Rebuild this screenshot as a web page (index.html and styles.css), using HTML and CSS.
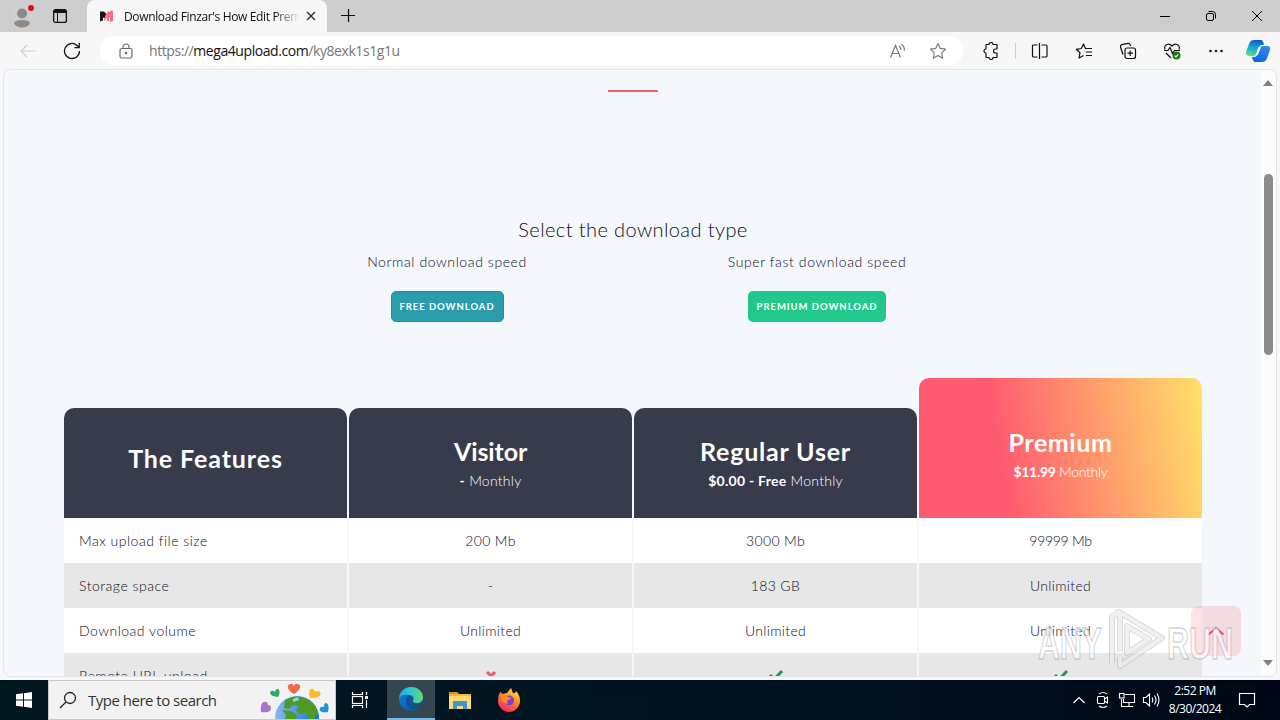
FILE: index.html
```html
<!DOCTYPE html>
<html lang="en">
<head>
    <meta charset="UTF-8">
    <meta name="viewport" content="width=device-width, initial-scale=1.0">
    <title>Download Finzar's How Edit Premium</title>
    <link rel="stylesheet" href="styles.css">
</head>
<body>

    <header class="titlebar">
        <div class="profile">
            <svg width="28" height="30" viewBox="0 0 28 30"><circle cx="14" cy="16" r="11.500" fill="#d0cfce"/><circle cx="14" cy="12.500" r="5" fill="#8d8987"/><path d="M6 22.500q0-3.500 8-3.500t8 3.500q-2.500 4-8 4t-8-4z" fill="#8d8987"/><circle cx="23" cy="7" r="3" fill="#e00b1c"/></svg>
        </div>
        <div class="workspaces">
            <svg width="16" height="16" viewBox="0 0 16 16" fill="none" stroke="#111"><rect x="1.600" y="1.600" width="12.800" height="12.800" rx="2" stroke-width="1.300"/><path d="M2 3.500h12" stroke-width="3"/><path d="M5.500 4v10"/></svg>
        </div>
        <div class="tab">
            <svg class="favicon" width="16" height="16" viewBox="0 0 16 16"><path d="M1 3.500h4l2 2v5l-3-1v3l-3 1z" fill="#16151c"/><path d="M6 8l3-5 1 1 3-2 1 2v9l-3 1V9l-1 0v4l-2 0V9l-2 4H5z" fill="#ff6d80"/></svg>
            <span class="tab-title">Download Finzar's How Edit Prem</span>
            <svg class="tab-close" width="10" height="10" viewBox="0 0 10 10" stroke="#222" stroke-width="1.200"><path d="M1 1l8 8M9 1l-8 8"/></svg>
        </div>
        <svg class="new-tab" width="14" height="14" viewBox="0 0 14 14" stroke="#111" stroke-width="1.200"><path d="M0 6.500h14M7.500 0v13"/></svg>
        <div class="window-buttons">
            <span><svg width="12" height="12" viewBox="0 0 12 12" stroke="#000"><path d="M1 6.500h10"/></svg></span>
            <span><svg width="12" height="12" viewBox="0 0 12 12" fill="none" stroke="#000"><rect x="1.500" y="3.500" width="7" height="7" rx="1.500"/><path d="M3.500 1.500h4q3 0 3 3v4"/></svg></span>
            <span><svg width="12" height="12" viewBox="0 0 12 12" stroke="#000"><path d="M1 1l10 10M11 1L1 11"/></svg></span>
        </div>
    </header>

    <nav class="toolbar">
        <span class="tool"><svg width="18" height="16" viewBox="0 0 18 16" fill="none" stroke="#cdcdcd" stroke-width="1.200"><path d="M17 8H2M8 2L2 8l6 6"/></svg></span>
        <span class="tool"><svg width="18" height="18" viewBox="0 0 18 18" fill="none" stroke="#111" stroke-width="1.300"><path d="M16.500 9A7.500 7.500 0 1 1 14 3.400L16 5.500M16.200 1v4.700h-4.700"/></svg></span>
        <div class="address">
            <svg width="14" height="16" viewBox="0 0 14 16" fill="none" stroke="#6a6a6a" stroke-width="1.200"><rect x="1" y="5.500" width="12" height="9.500" rx="1.800"/><path d="M4 5.500V4a3 3 0 0 1 6 0v1.500"/><circle cx="7" cy="10" r=".6" fill="#555"/></svg>
            <span class="url">https://<b>mega4upload.com</b>/ky8exk1s1g1u</span>
            <svg class="read-aloud" width="18" height="16" viewBox="0 0 18 16" fill="none" stroke="#777" stroke-width="1.200"><path d="M1.500 14.500L6.500 2.500 11.500 14.500M3.200 10.500h6.600M10 3q2 1.500 2 4M12 1q3.500 2 3.500 6.500"/></svg>
            <svg width="18" height="18" viewBox="0 0 18 18" fill="none" stroke="#777" stroke-width="1.100" stroke-linejoin="round"><path d="M9 1.500l2.300 4.900 5.300.7-3.900 3.700 1 5.400L9 13.600l-4.700 2.600 1-5.400-3.900-3.700 5.300-.7z"/></svg>
        </div>
        <span class="tool"><svg width="18" height="18" viewBox="0 0 18 18" fill="none" stroke="#111" stroke-width="1.200" stroke-linejoin="round"><path d="M4 2.500h3a2 2 0 0 1 4 0h4v4.500h-1.500a2 2 0 0 0 0 4H15v4.500h-4a2 2 0 0 1-4 0H4V11a2 2 0 0 1 0-4z"/></svg></span>
        <i class="divider"></i>
        <span class="tool"><svg width="18" height="18" viewBox="0 0 18 18" fill="none" stroke="#111" stroke-width="1.200"><path d="M6.500 3h-4A1 1 0 0 0 1.500 4v10a1 1 0 0 0 1 1h4M10.500 3h4.500a1 1 0 0 1 1 1v10a1 1 0 0 1-1 1h-4.500M8.500 1v16"/></svg></span>
        <span class="tool"><svg width="18" height="18" viewBox="0 0 18 18" fill="none" stroke="#111" stroke-width="1.200" stroke-linejoin="round"><path d="M10.500 6.500L8.500 2 6.300 6.500l-5 .8 3.700 3.500-1 5.200 4.500-2.500M11 10h6M11 13.500h6M10 6.500h7"/></svg></span>
        <span class="tool"><svg width="18" height="18" viewBox="0 0 18 18" fill="none" stroke="#111" stroke-width="1.200"><rect x="6" y="6" width="10.500" height="10.500" rx="2"/><path d="M11.200 8.500v5.500M8.500 11.200H14M4 12.500L1.500 5q-.4-1.800 1.200-2.400L9 1.300q1.600-.2 2.200 1.400l.6 1.300"/></svg></span>
        <span class="tool"><svg width="18" height="18" viewBox="0 0 18 18" fill="none" stroke="#111" stroke-width="1.200"><path d="M2 7.500C.5 2.500 6 .5 9 4c3-3.500 8.500-1.500 7 3.500M1 8.500h4l2-3 2.500 6 2-3H17M3 11l5 5"/><circle cx="13.500" cy="13.500" r="4" fill="#107c10" stroke="none"/><path d="M11.700 13.700l1.300 1.200 2.300-2.600" stroke="#fff"/></svg></span>
        <span class="tool"><svg width="18" height="18" viewBox="0 0 18 18" fill="#222"><circle cx="3.500" cy="9" r="1.300"/><circle cx="9" cy="9" r="1.300"/><circle cx="14.500" cy="9" r="1.300"/></svg></span>
        <span class="copilot">
            <svg width="24" height="24" viewBox="0 0 24 24">
                <defs>
                    <linearGradient id="cop1" x1=".6" y1="0" x2=".3" y2="1"><stop offset="0" stop-color="#0a5ec4"/><stop offset=".5" stop-color="#16a6dc"/><stop offset="1" stop-color="#5ee27c"/></linearGradient>
                    <linearGradient id="cop2" x1=".8" y1="0" x2=".3" y2="1"><stop offset="0" stop-color="#2f8eee"/><stop offset="1" stop-color="#1361e4"/></linearGradient>
                </defs>
                <path d="M8 1h7q2 0 3 5h-2q-3 0-4 4l-1 4q-1 3-4 3H3q-4 0-3-4L3 5q1-4 5-4z" fill="url(#cop1)"/>
                <path d="M16 23H9q-2 0-3-5h2q3 0 4-4l1-4q1-3 4-3h4q4 0 3 4l-3 8q-1 4-5 4z" fill="url(#cop2)"/>
                <path d="M12.500 8h2.500l-3 8H9.500z" fill="#f4fbff"/>
            </svg>
        </span>
    </nav>

    <div class="viewport">
        <main class="page">
            <div class="heading-line"></div>
            <h3 class="select-title">Select the download type</h3>
            <div class="types">
                <div class="type normal">
                    <p>Normal download speed</p>
                    <button class="btn btn-free">FREE DOWNLOAD</button>
                </div>
                <div class="type fast">
                    <p>Super fast download speed</p>
                    <button class="btn btn-premium">PREMIUM DOWNLOAD</button>
                </div>
            </div>

            <div class="plans">
                <section class="plan features">
                    <div class="plan-head"><h2>The Features</h2></div>
                    <div class="cell">Max upload file size</div>
                    <div class="cell">Storage space</div>
                    <div class="cell">Download volume</div>
                    <div class="cell">Remote URL upload</div>
                </section>
                <section class="plan visitor">
                    <div class="plan-head"><h2>Visitor</h2><p><b>-</b> Monthly</p></div>
                    <div class="cell">200 Mb</div>
                    <div class="cell">-</div>
                    <div class="cell">Unlimited</div>
                    <div class="cell"><svg width="12" height="12" viewBox="0 0 12 12" stroke="#f0566a" stroke-width="3"><path d="M2 2l8 8M10 2l-8 8"/></svg></div>
                </section>
                <section class="plan">
                    <div class="plan-head"><h2>Regular User</h2><p><b>$0.00 - Free</b> Monthly</p></div>
                    <div class="cell">3000 Mb</div>
                    <div class="cell">183 GB</div>
                    <div class="cell">Unlimited</div>
                    <div class="cell"><svg width="16" height="14" viewBox="0 0 16 14" fill="none" stroke="#1c9a50" stroke-width="3"><path d="M2 6l4 4.500L14 2"/></svg></div>
                </section>
                <section class="plan premium">
                    <div class="plan-head"><h2>Premium</h2><p><b>$11.99</b> Monthly</p></div>
                    <div class="cell">99999 Mb</div>
                    <div class="cell">Unlimited</div>
                    <div class="cell">Unlimited</div>
                    <div class="cell"><svg width="16" height="14" viewBox="0 0 16 14" fill="none" stroke="#1c9a50" stroke-width="3"><path d="M2 6l4 4.500L14 2"/></svg></div>
                </section>
            </div>
        </main>
        <div class="scrollbar">
            <svg width="10" height="6" viewBox="0 0 10 6"><path d="M0 6l5-6 5 6z" fill="#808080"/></svg>
            <div class="thumb"></div>
            <svg class="down" width="10" height="6" viewBox="0 0 10 6"><path d="M0 0h10L5 6z" fill="#808080"/></svg>
        </div>
        <a class="to-top"><svg width="18" height="10" viewBox="0 0 18 10" fill="none" stroke="#e2465f" stroke-width="1.800"><path d="M1.500 8.500L9 2l7.500 6.500"/></svg></a>
    </div>

    <div class="watermark">
        <svg width="200" height="70" viewBox="0 0 200 70">
            <g fill="#fff" fill-opacity=".6" stroke="#a4a4ac" stroke-opacity=".5" stroke-width="1.300">
                <text x="2" y="53" textLength="64" lengthAdjust="spacingAndGlyphs">ANY</text>
                <text x="131" y="53" textLength="66" lengthAdjust="spacingAndGlyphs">RUN</text>
            </g>
            <g fill="none" stroke-linejoin="round">
                <path d="M76 57V11L83 6l43 26-42 28v-9M84 6v40M91 20l22 13-22 14z" stroke="#a0a0a8" stroke-opacity=".4" stroke-width="6"/>
                <path d="M76 57V11L83 6l43 26-42 28v-9M84 6v40M91 20l22 13-22 14z" stroke="#fff" stroke-opacity=".6" stroke-width="4"/>
            </g>
        </svg>
    </div>

    <footer class="taskbar">
        <div class="start"><svg width="16" height="16" viewBox="0 0 16 16" fill="#fff"><path d="M0 2.300L7 1.300v6.200H0zM8 1.200L16 0v7.500H8zM0 8.500h7v6.200l-7-1zM8 8.500h8V16l-8-1.200z"/></svg></div>
        <div class="search">
            <svg width="18" height="18" viewBox="0 0 18 18" fill="none" stroke="#222" stroke-width="1.300"><circle cx="11" cy="7" r="5.500"/><path d="M7 11l-6 6"/></svg>
            <span>Type here to search</span>
            <svg class="globe" width="72" height="38" viewBox="0 0 72 38">
                <defs><linearGradient id="sea"><stop offset="0" stop-color="#8db4ff"/><stop offset="1" stop-color="#1277d2"/></linearGradient></defs>
                <circle cx="39" cy="37" r="22" fill="url(#sea)"/>
                <path d="M27 19q12-7 24 0 7 5 9 13l-4 6h-5l-3-6-7 1-3-4 3-4-6-1-4 4-5-1zM24 29l9 1 6 4-1 4H27l1-4z" fill="#4f9a24"/>
                <path d="M35 18l5-2 1 3-6 2z" fill="#8fd0f5"/>
                <path d="M36 13c-8-5-7-9-4-10q3-1 4 2 1-3 4-2c3 1 4 5-4 10z" fill="#f2694d"/>
                <path d="M20 16c-8-1-9-4-7-6q2-1 4 1 0-3 3-3c2 1 2 5 0 8z" fill="#28ad62"/>
                <path d="M52 17c-2-7 0-10 3-9q2 1 2 3 3-2 5 0c2 3-1 6-10 6z" fill="#ffb82e"/>
                <path d="M3 31c-1-8 2-11 5-10q2 0 2 3 3 0 3 3c0 4-4 5-10 4z" fill="#a776cc"/>
                <path d="M70 31c-7 1-9-1-8-4q1-2 4-1 0-4 2-4c3 1 3 5 2 9z" fill="#2492df"/>
            </svg>
        </div>
        <div class="task"><svg width="18" height="18" viewBox="0 0 18 18" fill="none" stroke="#fff" stroke-width="1.200"><rect x="1.500" y="5.500" width="10" height="7"/><path d="M1.500 1v2.500h10V1M1.500 17v-2.500h10V17M15.500 1v3M15.500 9v8"/><path d="M14 5h3v3h-3z" fill="#fff" stroke="none"/></svg></div>
        <div class="task active">
            <svg width="24" height="24" viewBox="0 0 24 24">
                <defs>
                    <linearGradient id="edgeTop"><stop offset="0" stop-color="#22a6e8"/><stop offset=".5" stop-color="#30c8d6"/><stop offset="1" stop-color="#62dc64"/></linearGradient>
                    <linearGradient id="edgeLow" x1="0" y1="0" x2="1" y2="1"><stop offset="0" stop-color="#1686d8"/><stop offset="1" stop-color="#0c4a94"/></linearGradient>
                </defs>
                <circle cx="12" cy="12" r="12" fill="url(#edgeLow)"/>
                <path d="M0 11C1 4 6 0 12 0c7 0 12 5 12 10 0 4-3 6-6 6-4 0-5-2-4-3 2-3-1-5-4-5C6 7 2 8 0 11z" fill="url(#edgeTop)"/>
                <path d="M10 8c-5 4-3 12 3 14 4 1 7-1 9-4-5 3-11 0-11-4 0-2 1-3 2-4z" fill="#104f99"/>
                <path d="M14 13c-1 2 1 4 4 4 2 0 4-1 5-2l-1 3c-5 2-10 0-10-4 0-1 0-2 1-3 1 1 1 1 1 2z" fill="#35474e"/>
            </svg>
        </div>
        <div class="task"><svg width="22" height="19" viewBox="0 0 22 19"><path d="M0 1h8l2 2h12v15H0z" fill="#f0b63d"/><path d="M0 1h8l2 2H0z" fill="#dc8e17"/><path d="M0 5h22v13H0z" fill="#ffda70"/><path d="M4 18v-7q0-1 1-1h12q1 0 1 1v7h-4v-3H8v3z" fill="#3a97d6"/></svg></div>
        <div class="task"><svg width="24" height="24" viewBox="0 0 24 24">
            <defs><linearGradient id="fox" x1=".8" y1="0" x2=".3" y2="1"><stop offset="0" stop-color="#fff04a"/><stop offset=".45" stop-color="#ff8a22"/><stop offset="1" stop-color="#f5206a"/></linearGradient></defs>
            <path d="M3 4l3 2q2-1 4-1l4-5 2 5 2 0 1-2q4 4 4 10c0 6-5 11-11 11S1 19 1 13q0-5 2-9z" fill="url(#fox)"/><circle cx="12" cy="12.500" r="5" fill="#7b3fd1"/><path d="M4 8q5-2 7 1l3 1q-1 2-3 2-2 2 0 4-6-1-7-8z" fill="#ff8c26"/>
        </svg></div>
        <div class="tray">
            <span><svg width="14" height="14" viewBox="0 0 14 14" fill="none" stroke="#fff" stroke-width="1.200"><path d="M1.500 10L7 4.500l5.500 5.500"/></svg></span>
            <span><svg width="14" height="18" viewBox="0 0 14 18" fill="none" stroke="#fff" stroke-width="1.100"><rect x="1.500" y="5.500" width="7" height="7" rx="1"/><path d="M8.500 8l3-2v6l-3-2M3 3q4-3 8 0M3 15q4 3 8 0"/></svg></span>
            <span><svg width="18" height="16" viewBox="0 0 18 16" fill="none" stroke="#fff" stroke-width="1.100"><path d="M7 2.500h9.500v8H5.500V7M11 10.500v3.500M7 14.500h8M3.500 7v7.500H7"/><rect x="1.500" y="1.500" width="4.500" height="4.500"/></svg></span>
            <span><svg width="18" height="16" viewBox="0 0 18 16" fill="none" stroke="#fff" stroke-width="1.100"><path d="M1.500 5.500h2.500L7.500 2v12L4 10.500H1.500zM10 5.500q1.500 2.500 0 5M12.500 3.500q3 4.500 0 9M15 1.500q4 6.500 0 13"/></svg></span>
            <div class="clock"><div>2:52 PM</div><div>8/30/2024</div></div>
            <svg class="notify" width="18" height="18" viewBox="0 0 18 18" fill="none" stroke="#fff" stroke-width="1.200"><path d="M1.500 2.500h15v11h-5L9 16l-2.500-2.500h-5z"/></svg>
        </div>
    </footer>

</body>
</html>
```
FILE: styles.css
```css
* {
    box-sizing: border-box;
}
body {
    margin: 0;
    width: 1280px;
    height: 720px;
    overflow: hidden;
    display: flex;
    flex-direction: column;
    position: relative;
    background: #f7f7f7;
    font-family: "Open Sans", "Noto Sans", sans-serif;
}
svg {
    flex: none;
    display: block;
}
h2, h3, p {
    margin: 0;
}

/* window title */
.titlebar {
    flex: none;
    height: 32px;
    display: flex;
    align-items: center;
    background: #cdcdcd;
}
.profile {
    width: 44px;
    display: flex;
    justify-content: center;
}
.workspaces {
    width: 43px;
    padding-left: 8px;
}
.tab {
    width: 240px;
    height: 32px;
    padding: 0 11px 0 12px;
    display: flex;
    align-items: center;
    background: #f7f7f7;
    border-radius: 8px 8px 0 0;
}
.tab-title {
    width: 176px;
    margin-left: 9px;
    overflow: hidden;
    white-space: nowrap;
    font-size: 12px;
    letter-spacing: -0.36px;
    color: #111;
    -webkit-mask-image: linear-gradient(to right, #000 150px, transparent 176px);
}
.tab-close {
    margin-left: 6px;
}
.new-tab {
    margin-left: 14px;
}
.window-buttons {
    margin-left: auto;
    display: flex;
}
.window-buttons span {
    width: 46px;
    display: flex;
    justify-content: center;
}

/* toolbar */
.toolbar {
    flex: none;
    height: 37px;
    padding: 0 2px 0 6px;
    display: flex;
    align-items: center;
}
.tool {
    width: 44px;
    display: flex;
    justify-content: center;
}
.copilot {
    width: 40px;
    display: flex;
    justify-content: center;
}
.divider {
    width: 1px;
    height: 16px;
    margin: 0 2px;
    background: #cfcfcf;
}
.address {
    width: 863px;
    height: 30px;
    margin: 0 6px;
    padding: 0 16px 0 19px;
    display: flex;
    align-items: center;
    background: #fff;
    border-radius: 15px;
}
.url {
    margin-left: 16px;
    font-size: 14px;
    line-height: 20px;
    letter-spacing: -0.43px;
    color: #767676;
}
.url b {
    font-weight: 400;
    color: #111;
}
.read-aloud {
    margin-left: auto;
    margin-right: 22px;
}

/* page */
.viewport {
    flex: none;
    position: relative;
    height: 608px;
    margin: 0 3px;
    display: flex;
    overflow: hidden;
    background: #f4f7fb;
    border: 1px solid #e4e4ea;
    border-radius: 8px;
}
.page {
    width: 1257px;
    padding-left: 60px;
    font-family: Lato, sans-serif;
    font-weight: 300;
    color: #0c0e1c;
}
.page b {
    font-weight: 700;
}
.heading-line {
    width: 50px;
    height: 2px;
    margin: 20px 0 0 544px;
    background: #ff5b70;
}
.select-title {
    width: 1138px;
    margin-top: 123px;
    text-align: center;
    font-size: 20px;
    line-height: 28px;
    font-weight: 300;
    letter-spacing: 0.4px;
}
.types {
    display: flex;
    padding-left: 198px;
    font-size: 14px;
    line-height: 20px;
}
.type {
    width: 370px;
    display: flex;
    flex-direction: column;
    align-items: center;
    margin-top: 9px;
    letter-spacing: 0.6px;
}
.btn {
    height: 31px;
    margin-top: 19px;
    padding: 0;
    border: 0;
    border-radius: 5px;
    color: #fff;
    font-family: Lato, sans-serif;
    font-size: 9.5px;
    font-weight: 700;
    letter-spacing: 0.95px;
}
.btn-free {
    width: 113px;
    background: #2a9dac;
    border: 1px solid #238f9e;
}
.btn-premium {
    width: 138px;
    background: #20c98b;
}
.plans {
    width: 1138px;
    margin-top: 56px;
    display: grid;
    grid-template-columns: repeat(4, 283px);
    gap: 2px;
    align-items: end;
}
.plan-head {
    height: 110px;
    padding-top: 3px;
    display: flex;
    flex-direction: column;
    align-items: center;
    justify-content: center;
    background: #373b4b;
    border-radius: 10px 10px 0 0;
    color: #fff;
}
.plan-head h2 {
    font-size: 25px;
    line-height: 32px;
    font-weight: 700;
    letter-spacing: 0.8px;
}
.features .plan-head h2 {
    margin-top: -13px;
    letter-spacing: 0.9px;
}
.visitor .plan-head h2 {
    letter-spacing: -0.1px;
}
.plan-head p {
    font-size: 14px;
    line-height: 27px;
    letter-spacing: 0.25px;
}
.premium .plan-head {
    height: 140px;
    padding-top: 14px;
    background: linear-gradient(80deg, #ff5b70 30%, #ffe168);
}
.premium .plan-head h2 {
    letter-spacing: 0.6px;
}
.premium .plan-head p {
    letter-spacing: -0.3px;
}
.cell {
    height: 45px;
    display: flex;
    align-items: center;
    justify-content: center;
    background: #fff;
    font-size: 14px;
    letter-spacing: 0.35px;
}
.cell:nth-child(odd) {
    background: #e7e7e7;
}
.features .cell {
    justify-content: flex-start;
    padding-left: 15px;
    letter-spacing: 0.5px;
}
.premium .cell:nth-child(2) {
    letter-spacing: -0.3px;
}
.scrollbar {
    width: 15px;
    height: 606px;
    padding: 10px 1px 10px 0;
    display: flex;
    flex-direction: column;
    align-items: center;
    background: #fcfcfc;
}
.thumb {
    width: 9px;
    height: 181px;
    margin-top: 88px;
    background: #8b8b8b;
    border-radius: 5px;
}
.down {
    margin-top: auto;
}
.to-top {
    position: absolute;
    left: 1187px;
    top: 536px;
    width: 50px;
    height: 50px;
    display: flex;
    align-items: center;
    justify-content: center;
    border-radius: 8px;
    background: rgba(255, 91, 112, 0.18);
}
.watermark {
    position: absolute;
    left: 1036px;
    top: 606px;
    font-family: "Liberation Sans", Arial, sans-serif;
    font-size: 44px;
    font-weight: 700;
}

/* taskbar */
.taskbar {
    flex: none;
    height: 40px;
    margin-top: 3px;
    display: flex;
    background: linear-gradient(to right, #001820, #001420 50%, #000817);
}
.start, .task {
    width: 48px;
    display: flex;
    align-items: center;
    justify-content: center;
}
.search {
    width: 288px;
    height: 40px;
    padding: 0 5px 0 10px;
    display: flex;
    align-items: center;
    background: #f2f2f2;
    border: 1px solid #c8c8c8;
    font-size: 15px;
    letter-spacing: -0.5px;
    color: #333;
}
.search span {
    margin-left: 11px;
}
.globe {
    margin-left: auto;
}
.task {
    width: 49px;
}
.search + .task {
    width: 48px;
}
.task.active {
    width: 48px;
    margin-left: 3px;
    background: #34474e;
    border-bottom: 2px solid #76b9ed;
}
.tray {
    margin-left: auto;
    padding-right: 5px;
    display: flex;
    align-items: center;
    color: #fff;
}
.tray span {
    width: 24px;
    display: flex;
    justify-content: center;
}
.clock {
    width: 64px;
    text-align: center;
    font-size: 12px;
    line-height: 18px;
    letter-spacing: -0.5px;
}
.notify {
    margin: 0 19px 0 11px;
}
```
